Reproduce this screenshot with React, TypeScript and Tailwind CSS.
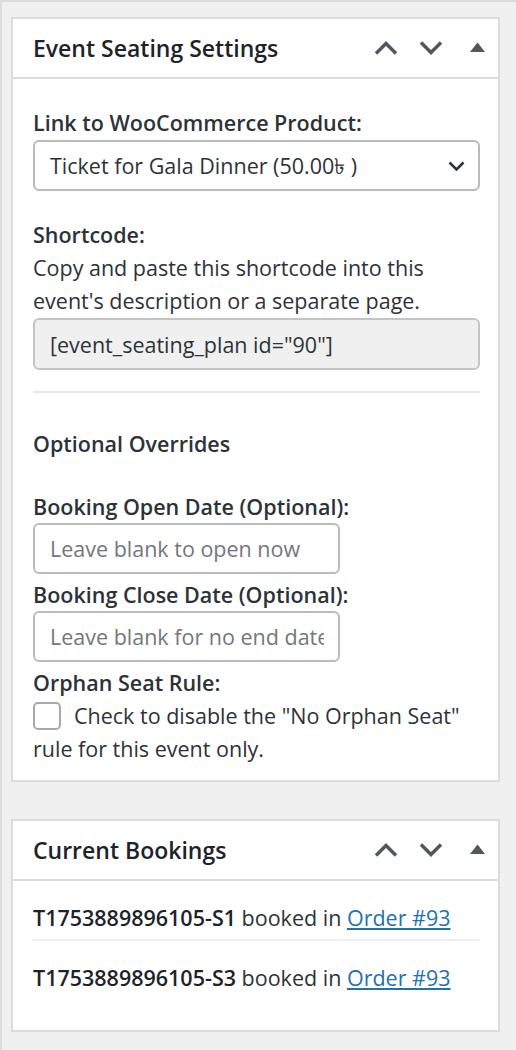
import React from "react";

function ChevronUp() {
    return (
        <svg width="24" height="14" viewBox="0 0 24 14" fill="none">
            <path d="M2 12.5 L12 2.5 L22 12.5" stroke="#50575e" strokeWidth="3.5" />
        </svg>
    );
}

function ChevronDown() {
    return (
        <svg width="24" height="14" viewBox="0 0 24 14" fill="none">
            <path d="M2 1.5 L12 11.5 L22 1.5" stroke="#50575e" strokeWidth="3.5" />
        </svg>
    );
}

function Triangle() {
    return (
        <svg width="15" height="10" viewBox="0 0 15 10">
            <polygon points="0,10 7.5,0.5 15,10" fill="#50575e" />
        </svg>
    );
}

function PostboxHeader({ title }: { title: string }) {
    return (
        <div className="flex h-[60px] items-center justify-between border-b-2 border-[#dcdcde] pl-[20px] pr-[13px]">
            <h2 className="text-[23px] font-semibold text-[#1d2327]">{title}</h2>
            <div className="flex items-center">
                <ChevronUp />
                <span className="ml-[21px]">
                    <ChevronDown />
                </span>
                <span className="ml-[27px] mb-[2px]">
                    <Triangle />
                </span>
            </div>
        </div>
    );
}

const bookings = [
    { seat: "T1753889896105-S1", order: "Order #93" },
    { seat: "T1753889896105-S3", order: "Order #93" },
];

export default function App() {
    return (
        <div className="h-[1050px] w-[516px] border-l-2 border-t-2 border-[#dcdcde] bg-[#f0f0f1] pl-[9px] pt-[15px] font-['Open_Sans',sans-serif] text-[21.5px] leading-[33px] text-[#2c3338]">
            {/* settings box */}
            <div className="w-[489px] border-2 border-[#dcdcde] bg-white">
                <PostboxHeader title="Event Seating Settings" />
                <div className="pl-[20px] pr-[18px] pt-[27px] pb-[15px]">
                    <label className="block font-semibold">Link to WooCommerce Product:</label>
                    <div className="mt-[1px] flex h-[51px] items-center justify-between rounded-[6px] border-2 border-[#b9bbbe] pl-[15px] pr-[13px]">
                        <span>Ticket for Gala Dinner (50.00৳ )</span>
                        <svg width="17" height="10" viewBox="0 0 17 10" fill="none">
                            <path d="M1.5 1.5 L8.5 8.5 L15.5 1.5" stroke="#2c3338" strokeWidth="2.5" />
                        </svg>
                    </div>

                    <div className="mt-[27px] font-semibold">Shortcode:</div>
                    <p>Copy and paste this shortcode into this event's description or a separate page.</p>
                    <div className="mt-[1px] flex h-[52px] items-center rounded-[6px] border-2 border-[#c3c4c7] bg-[#f0f0f1] pl-[15px]">
                        [event_seating_plan id="90"]
                    </div>

                    <hr className="mt-[21px] border-t-2 border-[#e8e8e9]" />

                    <h4 className="mt-[34px] font-semibold">Optional Overrides</h4>

                    <label className="mt-[30px] block font-semibold">Booking Open Date (Optional):</label>
                    <input
                        placeholder="Leave blank to open now"
                        className="block h-[51px] w-[307px] rounded-[6px] border-2 border-[#b9bbbe] pl-[15px] pr-[14px] placeholder:text-[#72777c]"
                    />
                    <label className="mt-[4px] block font-semibold">Booking Close Date (Optional):</label>
                    <input
                        placeholder="Leave blank for no end date"
                        className="block h-[51px] w-[307px] rounded-[6px] border-2 border-[#b9bbbe] pl-[15px] pr-[14px] placeholder:text-[#72777c]"
                    />

                    <div className="mt-[4px] font-semibold">Orphan Seat Rule:</div>
                    <div className="flex items-center">
                        <span className="h-[28px] w-[28px] shrink-0 rounded-[5px] border-2 border-[#a7aaad]" />
                        <span className="ml-[13px]">Check to disable the "No Orphan Seat"</span>
                    </div>
                    <div>rule for this event only.</div>
                </div>
            </div>

            {/* bookings box */}
            <div className="mt-[37px] w-[489px] border-2 border-[#dcdcde] bg-white">
                <PostboxHeader title="Current Bookings" />
                <ul className="pl-[20px] pr-[19px] pt-[20px] pb-[36px]">
                    {bookings.map((b, i) => (
                        <li
                            key={b.seat}
                            className={i === 0 ? "border-b-2 border-[#f0f0f1] pb-[5px]" : "pt-[20px]"}
                        >
                            <strong className="font-semibold text-[#1d2327]">{b.seat}</strong> booked in{" "}
                            <a href="#" className="text-[#2271b1] underline">
                                {b.order}
                            </a>
                        </li>
                    ))}
                </ul>
            </div>
        </div>
    );
}
